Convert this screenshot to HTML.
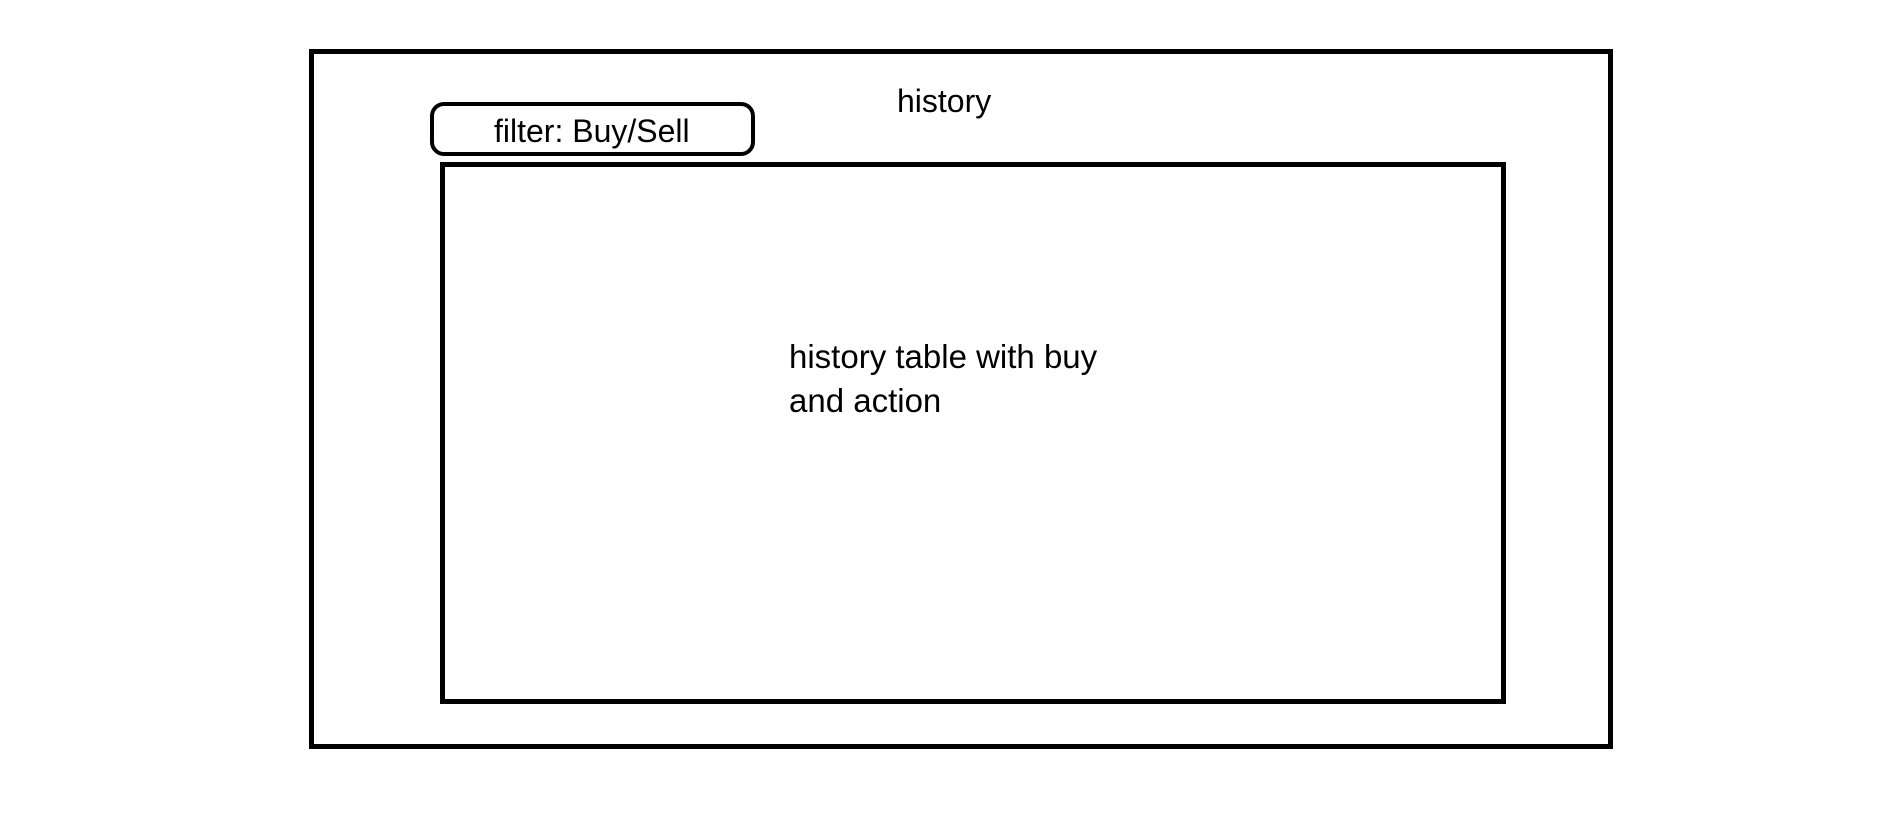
<!DOCTYPE html>
<html><head><meta charset="utf-8"><style>
html,body{margin:0;padding:0;background:#fff;width:1898px;height:816px;overflow:hidden;font-family:"Liberation Sans",sans-serif;color:#000}
.b{position:absolute;border:5px solid #000;box-sizing:border-box}
.t{position:absolute;white-space:nowrap;font-size:32px;line-height:1}
</style></head><body>
<div class="b" style="left:309px;top:49px;width:1304px;height:700px"></div>
<div class="b" style="left:440px;top:162px;width:1066px;height:542px"></div>
<div class="b" style="left:430px;top:102px;width:325px;height:54px;border-radius:14px;border-width:4px"></div>
<div class="t" style="left:897px;top:85px">history</div>
<div class="t" style="left:494px;top:115px">filter: Buy/Sell</div>
<div class="t" style="left:789px;top:335px;line-height:44px;font-size:33px">history table with buy<br>and action</div>
</body></html>
